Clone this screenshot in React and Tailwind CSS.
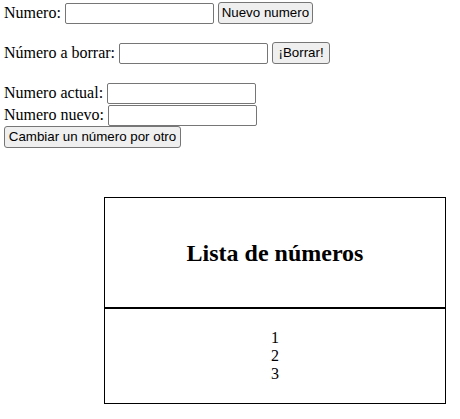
import { useState } from 'react';

const inputCls = "w-[149px] h-[21px] border border-[#767676] rounded-[2px] bg-white px-[2px] text-[13.33px] outline-none";
const btnCls = "h-[22px] border border-[#767676] rounded-[3px] bg-[#efefef] text-[13.33px] text-black font-['Liberation_Sans',Arial,sans-serif] flex items-center justify-center";

export default function App() {
  const [numeros] = useState([1, 2, 3]);

  return (
    <main className="bg-white text-black font-['Liberation_Serif','Times_New_Roman',serif] text-[16px] min-h-[419px] pt-[2px]">
      <div className="flex items-center gap-[4px] h-[22px] pl-[4px]">
        <span>Numero:</span>
        <input className={inputCls} />
        <button className={btnCls + " w-[95px]"}>Nuevo numero</button>
      </div>

      <div className="flex items-center gap-[4px] h-[22px] pl-[4px] mt-[18px]">
        <span>Número a borrar:</span>
        <input className={inputCls} />
        <button className={btnCls + " w-[58px]"}>¡Borrar!</button>
      </div>

      <div className="mt-[18px] pl-[4px]">
        <div className="flex items-center gap-[4px] h-[22px]">
          <span>Numero actual:</span>
          <input className={inputCls} />
        </div>
        <div className="flex items-center gap-[4px] h-[22px]">
          <span>Numero nuevo:</span>
          <input className={inputCls} />
        </div>
        <button className={btnCls + " w-[177px]"}>Cambiar un número por otro</button>
      </div>

      <div className="ml-[104px] w-[342px] mt-[49px] flex flex-col">
        <div className="h-[111px] border border-black flex items-center justify-center">
          <h2 className="text-[24px] font-bold">Lista de números</h2>
        </div>
        <div className="h-[96px] border border-black flex flex-col items-center justify-center leading-[18px]">
          {numeros.map(n => <div key={n}>{n}</div>)}
        </div>
      </div>
    </main>
  );
}
